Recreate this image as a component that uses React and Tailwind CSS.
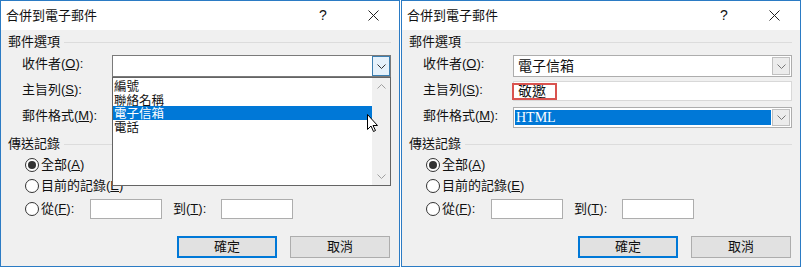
const font = "font-['Liberation_Sans','Noto_Sans_CJK_TC',sans-serif]";

function U({ children }) {
  return <span className="underline underline-offset-[1px]">{children}</span>;
}

function Chevron({ color = "#555" }) {
  return (
    <svg width="9" height="5" viewBox="0 0 9 5">
      <polyline points="0.5,0.5 4.5,4.5 8.5,0.5" fill="none" stroke={color} strokeWidth="1" />
    </svg>
  );
}

function ChevronUp({ color = "#a0a0a0" }) {
  return (
    <svg width="9" height="5" viewBox="0 0 9 5">
      <polyline points="0.5,4.5 4.5,0.5 8.5,4.5" fill="none" stroke={color} strokeWidth="1" />
    </svg>
  );
}

function Radio({ checked }) {
  return (
    <div className="w-[14px] h-[14px] rounded-full border border-[#333] bg-white flex items-center justify-center">
      {checked && <div className="w-[8px] h-[8px] rounded-full bg-[#333]" />}
    </div>
  );
}

function GroupHeader({ children }) {
  return (
    <div className="flex items-center pl-[7px] pr-[8px] gap-[4px] h-[16px]">
      <span className="text-[13px] leading-[16px]">{children}</span>
      <div className="flex-1 h-px bg-[#dcdcdc]" />
    </div>
  );
}

function Row({ label, children, h }) {
  return (
    <div className={`flex items-start ${h}`}>
      <div className="w-[111px] pl-[21px] text-[13px] leading-[16px] pt-[1px]">{label}</div>
      <div className="flex-1 h-full mr-[8px]">{children}</div>
    </div>
  );
}

function Dialog({ open }) {
  return (
    <div className={`w-[400px] h-[267px] border border-[#2b7bc4] flex flex-col text-[#111] ${font}`}>
      <div className="h-[29px] bg-white flex items-center pl-[5px] shrink-0">
        <span className="text-[13px]">合併到電子郵件</span>
        <div className="ml-auto flex pr-[3px]">
          <div className="w-[46px] flex justify-center text-[14px]">?</div>
          <div className="w-[4px]" />
          <div className="w-[46px] flex justify-center items-center">
            <svg width="11" height="11" viewBox="0 0 11 11">
              <path d="M0.5 0.5L10.5 10.5M10.5 0.5L0.5 10.5" stroke="#222" strokeWidth="1" />
            </svg>
          </div>
        </div>
      </div>
      <div className="flex-1 bg-[#f0f0f0] relative flex flex-col">
        <div className="mt-[4px]">
          <GroupHeader>郵件選項</GroupHeader>
        </div>
        <div className="mt-[5px]">
          <Row h="h-[22px]" label={<>收件者(<U>O</U>):</>}>
            <div className={`h-full bg-white border flex items-center ${open ? "border-[#7a7a7a]" : "border-[#adadad]"}`}>
              <span className="flex-1 pl-[4px] text-[14px]">{open ? "" : "電子信箱"}</span>
              {open ? (
                <div className="w-[18px] h-[20px] bg-[#e5f1fb] border border-[#3c7fb1] flex items-center justify-center">
                  <Chevron color="#333" />
                </div>
              ) : (
                <div className="w-[18px] h-[18px] bg-[#ececec] border border-[#c0c0c0] flex items-center justify-center mr-[1px]">
                  <Chevron color="#777" />
                </div>
              )}
            </div>
          </Row>
        </div>
        <div className="mt-[4px]">
          <Row h="h-[20px]" label={<>主旨列(<U>S</U>):</>}>
            <div className="h-full bg-white border border-[#d8d8d8] flex items-center relative">
              {!open && (
                <div className="absolute left-[-2px] top-[1px] w-[45px] h-[17px] border-2 border-[#d9534f]" />
              )}
              {!open && <span className="pl-[4px] text-[14px]">敬邀</span>}
            </div>
          </Row>
        </div>
        <div className="mt-[6px]">
          <Row h="h-[21px]" label={<>郵件格式(<U>M</U>):</>}>
            <div className="h-full bg-white border border-[#adadad] flex items-center">
              <div className="flex-1 h-[15px] ml-[1px] bg-[#0078d7] flex items-center">
                {!open && (
                  <span className="text-white text-[14px] pl-[1px] font-['Liberation_Serif',serif]">HTML</span>
                )}
              </div>
              <div className="w-[18px] h-[17px] ml-[1px] mr-[1px] bg-[#ececec] border border-[#c0c0c0] flex items-center justify-center">
                <Chevron color="#777" />
              </div>
            </div>
          </Row>
        </div>
        <div className="mt-[8px]">
          <GroupHeader>傳送記錄</GroupHeader>
        </div>
        <div className="mt-[3px] h-[20px] flex items-center pl-[24px] gap-[2px] text-[13px]">
          <Radio checked />
          <span>全部(<U>A</U>)</span>
        </div>
        <div className="mt-[1px] h-[20px] flex items-center pl-[24px] gap-[2px] text-[13px]">
          <Radio />
          <span>目前的記錄(<U>E</U>)</span>
        </div>
        <div className="mt-[3px] h-[20px] flex items-center pl-[24px] text-[13px]">
          <Radio />
          <span className="ml-[2px] w-[49px]">從(<U>F</U>):</span>
          <div className="w-[72px] h-[20px] bg-white border border-[#adadad]" />
          <span className="ml-[11px] w-[48px]">到(<U>T</U>):</span>
          <div className="w-[72px] h-[20px] bg-white border border-[#adadad]" />
        </div>
        <div className="mt-[17px] flex justify-end gap-[13px] pr-[9px]">
          <div className="w-[100px] h-[22px] bg-[#e1e1e1] border border-[#0078d7] shadow-[inset_0_0_0_1px_#0078d7] flex items-center justify-center text-[13px]">
            確定
          </div>
          <div className="w-[100px] h-[22px] bg-[#e1e1e1] border border-[#adadad] flex items-center justify-center text-[13px]">
            取消
          </div>
        </div>

        {open && (
          <div className="absolute left-[111px] top-[47px] w-[279px] h-[109px] bg-white border border-[#646464] flex">
            <div className="flex-1 pt-[1px] text-[12.5px] leading-[13.5px] font-['Noto_Sans_CJK_TC',sans-serif]">
              <div className="h-[13.5px] pl-[1px]">編號</div>
              <div className="h-[13.5px] pl-[1px]">聯絡名稱</div>
              <div className="h-[13.5px] pl-[1px] bg-[#0078d7] text-white">電子信箱</div>
              <div className="h-[13.5px] pl-[1px]">電話</div>
            </div>
            <div className="w-[18px] bg-[#f0f0f0] flex flex-col items-center justify-between py-[6px]">
              <ChevronUp />
              <Chevron color="#a0a0a0" />
            </div>
          </div>
        )}
        {open && (
          <svg className="absolute left-[366px] top-[84px]" width="12" height="19" viewBox="0 0 12 19">
            <path d="M0.5 0.5 L0.5 15.5 L4 12 L6.5 17.5 L8.5 16.5 L6 11.5 L10.5 11.5 Z" fill="white" stroke="#000" strokeWidth="1" strokeLinejoin="round" />
          </svg>
        )}
      </div>
    </div>
  );
}

export default function App() {
  return (
    <div className="w-[801px] h-[267px] bg-white flex gap-[1px]">
      <Dialog open />
      <Dialog />
    </div>
  );
}
